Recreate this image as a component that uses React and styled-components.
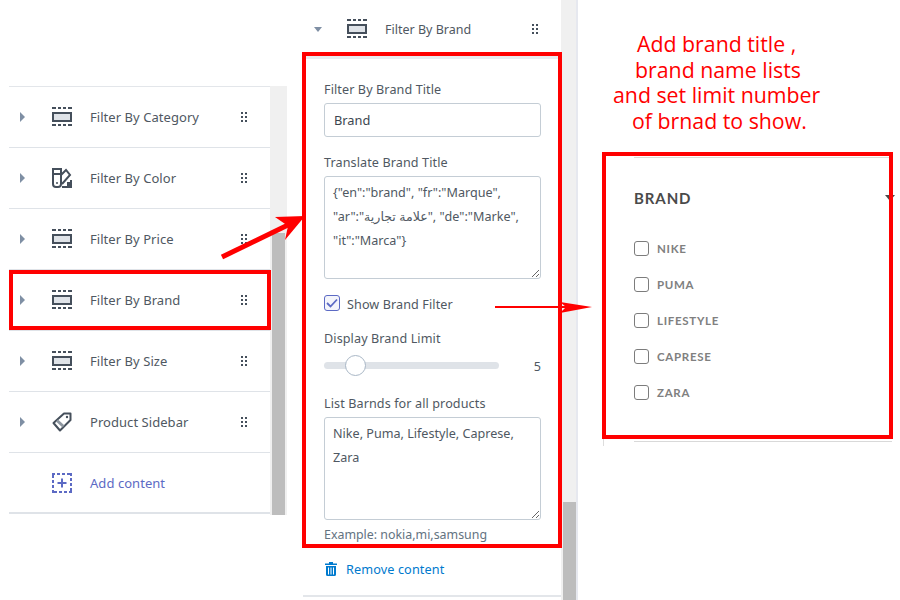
import React from "react";
import styled, { createGlobalStyle } from "styled-components";

const GlobalStyle = createGlobalStyle`
  html, body { margin: 0; padding: 0; background: #fff; }
  * { box-sizing: border-box; }
`;

const UI_FONT = `"Noto Sans", "DejaVu Sans", sans-serif`;
const TEXT = "#4f5862";

const Page = styled.div`
  position: relative;
  width: 900px;
  height: 600px;
  overflow: hidden;
  display: flex;
  align-items: flex-start;
  background: #fff;
  font-family: ${UI_FONT};
  color: ${TEXT};
`;

/* left panel */
const ListPanel = styled.div`
  display: flex;
  margin: 86px 0 0 9px;
  width: 278px;
  height: 429px;
`;
const List = styled.div`
  width: 261px;
  border-top: 1px solid #e3e6ea;
`;
const Row = styled.div`
  height: 61px;
  display: flex;
  align-items: center;
  border-bottom: ${(p) => (p.$last ? "2px" : "1px")} solid #dfe3e8;
  padding-left: ${(p) => (p.$noCaret ? "43px" : "11px")};
  padding-right: 23px;
  font-size: 13px;
  letter-spacing: 0.05px;
`;
const RowText = styled.span`
  flex: 1;
  margin-left: 18px;
  color: ${(p) => p.$color || TEXT};
`;
const CaretRight = styled.span`
  width: 0;
  height: 0;
  margin-right: 27px;
  border-style: solid;
  border-width: 5px 0 5px 5px;
  border-color: transparent transparent transparent #7f8fa4;
`;
const Track = styled.div`
  width: 17px;
  height: 100%;
  background: #f0f0f0;
  padding: ${(p) => p.$top}px 2px 0;
  flex: none;
  border-right: ${(p) => (p.$edge ? "2px solid #e6e8ef" : "none")};
`;
const Thumb = styled.div`
  width: 13px;
  height: 100%;
  background: #bdbdbd;
`;

/* middle panel */
const EditorPanel = styled.div`
  display: flex;
  margin-left: 16px;
  width: 275px;
  height: 600px;
`;
const Editor = styled.div`
  width: 258px;
  height: 600px;
  display: flex;
  flex-direction: column;
`;
const EditorHead = styled.div`
  height: 59px;
  flex: none;
  display: flex;
  align-items: center;
  padding: 2px 23px 0 11px;
  border-bottom: 3px solid #e9ebef;
  font-size: 12.5px;
`;
const CaretDown = styled.span`
  width: 0;
  height: 0;
  margin-right: 25px;
  border-style: solid;
  border-width: 5px 4.5px 0 4.5px;
  border-color: #7f8fa4 transparent transparent transparent;
`;
const Form = styled.div`
  height: 538px;
  flex: none;
  padding: 22px 0 0 21px;
  border-bottom: 2px solid #e3e6ea;
  display: flex;
  flex-direction: column;
`;
const Label = styled.label`
  font-size: 12.6px;
  line-height: 16px;
  letter-spacing: 0.1px;
  color: ${TEXT};
  padding-top: 1px;
  margin-top: ${(p) => p.$top || 0}px;
  margin-bottom: ${(p) => p.$bottom || 5}px;
`;
const TextInput = styled.input`
  width: 217px;
  height: 34px;
  flex: none;
  border: 1px solid #c4cdd5;
  border-radius: 3px;
  padding: 0 9px;
  margin-bottom: 17px;
  font-family: ${UI_FONT};
  font-size: 12.8px;
  color: #3c4650;
  background: #fff;
  outline: none;
`;
const TextBox = styled.textarea`
  display: block;
  width: 217px;
  height: 103px;
  flex: none;
  border: 1px solid #c4cdd5;
  border-radius: 3px;
  padding: 4px 8px;
  font-family: ${UI_FONT};
  font-size: 12.6px;
  line-height: 24px;
  color: ${TEXT};
  background: #fff;
  outline: none;
  resize: vertical;
`;
const CheckRow = styled.div`
  display: flex;
  align-items: center;
  gap: 7px;
  margin-top: 15px;
  height: 17px;
  font-size: 12.6px;
  letter-spacing: 0.1px;
`;
const CheckText = styled.span`
  margin-top: 4px;
`;
const CheckMark = styled.span`
  width: 16px;
  height: 16px;
  border: 1px solid #5c6ac4;
  border-radius: 3px;
  display: flex;
  align-items: center;
  justify-content: center;
  background: #f4f5fb;
`;
const SliderRow = styled.div`
  display: flex;
  align-items: center;
  width: 217px;
  height: 24px;
  margin-bottom: 18px;
`;
const SliderTrack = styled.div`
  position: relative;
  width: 175px;
  height: 7px;
  border-radius: 4px;
  background: #dfe3e8;
`;
const SliderKnob = styled.span`
  position: absolute;
  top: -7px;
  width: 21px;
  height: 21px;
  border-radius: 50%;
  background: #fff;
  border: 1px solid #a9b7c6;
`;
const SliderValue = styled.span`
  flex: 1;
  text-align: right;
  font-size: 12.6px;
  padding-top: 2px;
`;
const HelpText = styled.div`
  font-size: 12.4px;
  color: #637381;
  margin-top: 6px;
`;
const RemoveLink = styled.div`
  display: flex;
  align-items: center;
  gap: 9px;
  margin-top: 17px;
  padding-left: 1px;
  font-size: 12.7px;
  letter-spacing: 0.1px;
  color: #007ace;
`;

/* right panel */
const Preview = styled.div`
  flex: 1;
  display: flex;
  flex-direction: column;
  height: 600px;
`;
const Note = styled.div`
  font-family: "Open Sans", sans-serif;
  color: #ff0000;
  font-size: 21.3px;
  line-height: 25.7px;
  padding-top: 31px;
  height: 157px;
  flex: none;
`;
const NoteLine = styled.div`
  padding-left: ${(p) => p.$indent}px;
  white-space: nowrap;
`;
const Facet = styled.div`
  margin-left: 56px;
  width: 258px;
  height: 285px;
  border-top: 1px solid #ddd9d5;
  border-bottom: 1px solid #d9d9d9;
  font-family: Lato, sans-serif;
  flex: none;
`;
const FacetHead = styled.div`
  display: flex;
  align-items: center;
  justify-content: space-between;
  height: 72px;
  padding-top: 8px;
  font-size: 15px;
  font-weight: 700;
  letter-spacing: 0.9px;
  color: #4a4a4a;
`;
const FacetCaret = styled.span`
  width: 0;
  height: 0;
  margin-right: -3px;
  border-style: solid;
  border-width: 6px 5px 0 5px;
  border-color: #4a4a4a transparent transparent transparent;
`;
const FacetRow = styled.div`
  display: flex;
  align-items: center;
  gap: 8px;
  height: 36px;
  font-size: 11.5px;
  font-weight: 700;
  letter-spacing: 0.7px;
  color: #808080;
`;
const FacetBox = styled.span`
  width: 15px;
  height: 15px;
  border: 1px solid #7c7c7c;
  border-radius: 3px;
`;

/* red markup drawn over the page */
const RedBox = styled.div`
  position: absolute;
  left: ${(p) => p.$x}px;
  top: ${(p) => p.$y}px;
  width: ${(p) => p.$w}px;
  height: ${(p) => p.$h}px;
  border: 4px solid #ff0000;
  pointer-events: none;
`;
const Markup = styled.svg`
  position: absolute;
  left: 0;
  top: 0;
  pointer-events: none;
`;

const SectionIcon = () => (
  <svg width="20" height="20" viewBox="0 0 20 20">
    <rect x="1" y="6" width="18" height="8" fill="#dfe3e8" stroke="#454f5b" strokeWidth="2" />
    <path d="M0 1h4M6 1h3M11 1h3M16 1h4M0 18h4M6 18h3M11 18h3M16 18h4" stroke="#454f5b" strokeWidth="2" fill="none" />
  </svg>
);

const ColorIcon = () => (
  <svg width="20" height="20" viewBox="0 0 20 20" fill="none" stroke="#454f5b" strokeWidth="2">
    <path d="M1 1h8v15a3 3 0 0 1-3 3H4a3 3 0 0 1-3-3z" />
    <path d="M1 6h8" />
    <path d="M9 7l5-5 4 5-8 9" />
    <path d="M10 19h9v-7" />
    <path d="M15 19v-5h4v5z" fill="#454f5b" stroke="none" />
    <circle cx="5" cy="15" r="1" fill="#454f5b" stroke="none" />
  </svg>
);

const TagIcon = () => (
  <svg width="20" height="20" viewBox="0 0 20 20" fill="none" stroke="#454f5b" strokeWidth="2">
    <path d="M12 1.5h6.5V8L8 18.5 1.5 11z" strokeLinejoin="round" />
    <path d="M5 8.5l6.5 6" stroke="#8e97a1" strokeWidth="3" />
    <circle cx="15" cy="5" r="1.2" fill="#454f5b" stroke="none" />
  </svg>
);

const AddIcon = () => (
  <svg width="20" height="20" viewBox="0 0 20 20" fill="none" stroke="#5c6ac4" strokeWidth="2">
    <path d="M0 1h3M5 1h3M10 1h3M15 1h3M19 0v3M19 5v3M19 10v3M19 15v3M20 19h-3M15 19h-3M10 19h-3M5 19H2M1 20v-3M1 15v-3M1 10V7M1 5V2" />
    <path d="M10 5.5v9M5.5 10h9" />
  </svg>
);

const Handle = () => (
  <svg width="6" height="10" viewBox="0 0 6 10" fill="#454f5b">
    {[0, 4, 8].map((y) => (
      <React.Fragment key={y}>
        <rect x="0" y={y} width="2" height="2" />
        <rect x="4" y={y} width="2" height="2" />
      </React.Fragment>
    ))}
  </svg>
);

const TrashIcon = () => (
  <svg width="12" height="14" viewBox="0 0 12 14" fill="#007ace">
    <path d="M4 0h4v1.5h4V3H0V1.5h4z" />
    <path d="M1 4h10v8.5a1.5 1.5 0 0 1-1.5 1.5h-7A1.5 1.5 0 0 1 1 12.5zM3 5.5v7h1v-7zM5.5 5.5v7h1v-7zM8 5.5v7h1v-7z" fillRule="evenodd" />
  </svg>
);

const rows = [
  ["Filter By Category", SectionIcon],
  ["Filter By Color", ColorIcon],
  ["Filter By Price", SectionIcon],
  ["Filter By Brand", SectionIcon],
  ["Filter By Size", SectionIcon],
  ["Product Sidebar", TagIcon],
];

const brands = ["NIKE", "PUMA", "LIFESTYLE", "CAPRESE", "ZARA"];

export default function App() {
  return (
    <Page>
      <GlobalStyle />
      <ListPanel>
        <List>
          {rows.map(([name, Icon]) => (
            <Row key={name}>
              <CaretRight />
              <Icon />
              <RowText>{name}</RowText>
              <Handle />
            </Row>
          ))}
          <Row $noCaret $last>
            <AddIcon />
            <RowText $color="#5c6ac4">Add content</RowText>
          </Row>
        </List>
        <Track $top={147}>
          <Thumb />
        </Track>
      </ListPanel>

      <EditorPanel>
        <Editor>
          <EditorHead>
            <CaretDown />
            <SectionIcon />
            <RowText>Filter By Brand</RowText>
            <Handle />
          </EditorHead>
          <Form>
            <Label>Filter By Brand Title</Label>
            <TextInput readOnly value="Brand" />
            <Label>Translate Brand Title</Label>
            <TextBox
              readOnly
              value={`{"en":"brand", "fr":"Marque", "ar":"علامة تجارية", "de":"Marke", "it":"Marca"}`}
            />
            <CheckRow>
              <CheckMark>
                <svg width="12" height="10" viewBox="0 0 12 10" fill="none" stroke="#5c6ac4" strokeWidth="1.8">
                  <path d="M1 5l3.5 3.5L11 1.5" />
                </svg>
              </CheckMark>
              <CheckText>Show Brand Filter</CheckText>
            </CheckRow>
            <Label $top={19} $bottom={6}>Display Brand Limit</Label>
            <SliderRow>
              <SliderTrack>
                <SliderKnob style={{ left: 21 }} />
              </SliderTrack>
              <SliderValue>5</SliderValue>
            </SliderRow>
            <Label>List Barnds for all products</Label>
            <TextBox readOnly value="Nike, Puma, Lifestyle, Caprese, Zara" />
            <HelpText>Example: nokia,mi,samsung</HelpText>
            <RemoveLink>
              <TrashIcon />
              Remove content
            </RemoveLink>
          </Form>
        </Editor>
        <Track $top={502} $edge>
          <Thumb />
        </Track>
      </EditorPanel>

      <Preview>
        <Note>
          <NoteLine $indent={59}>Add brand title ,</NoteLine>
          <NoteLine $indent={57}>brand name lists</NoteLine>
          <NoteLine $indent={35}>and set limit number</NoteLine>
          <NoteLine $indent={54}>of brnad to show.</NoteLine>
        </Note>
        <Facet>
          <FacetHead>
            BRAND
            <FacetCaret />
          </FacetHead>
          {brands.map((brand) => (
            <FacetRow key={brand}>
              <FacetBox />
              {brand}
            </FacetRow>
          ))}
        </Facet>
      </Preview>

      <RedBox $x={9} $y={270} $w={262} $h={60} />
      <RedBox $x={302} $y={52} $w={260} $h={496} />
      <RedBox $x={602} $y={152} $w={291} $h={287} />
      <Markup width="900" height="600" viewBox="0 0 900 600">
        <path d="M222 257L290 224" stroke="#ff0000" strokeWidth="5" fill="none" />
        <path d="M275 217L305 216L285 240L288 226z" fill="#ff0000" />
        <path d="M495 307H566" stroke="#ff0000" strokeWidth="2" fill="none" />
        <path d="M560 302L592 307L560 313L566 307z" fill="#ff0000" />
        <path d="M603.5 439V446" stroke="#dddddd" strokeWidth="1" fill="none" />
      </Markup>
    </Page>
  );
}
